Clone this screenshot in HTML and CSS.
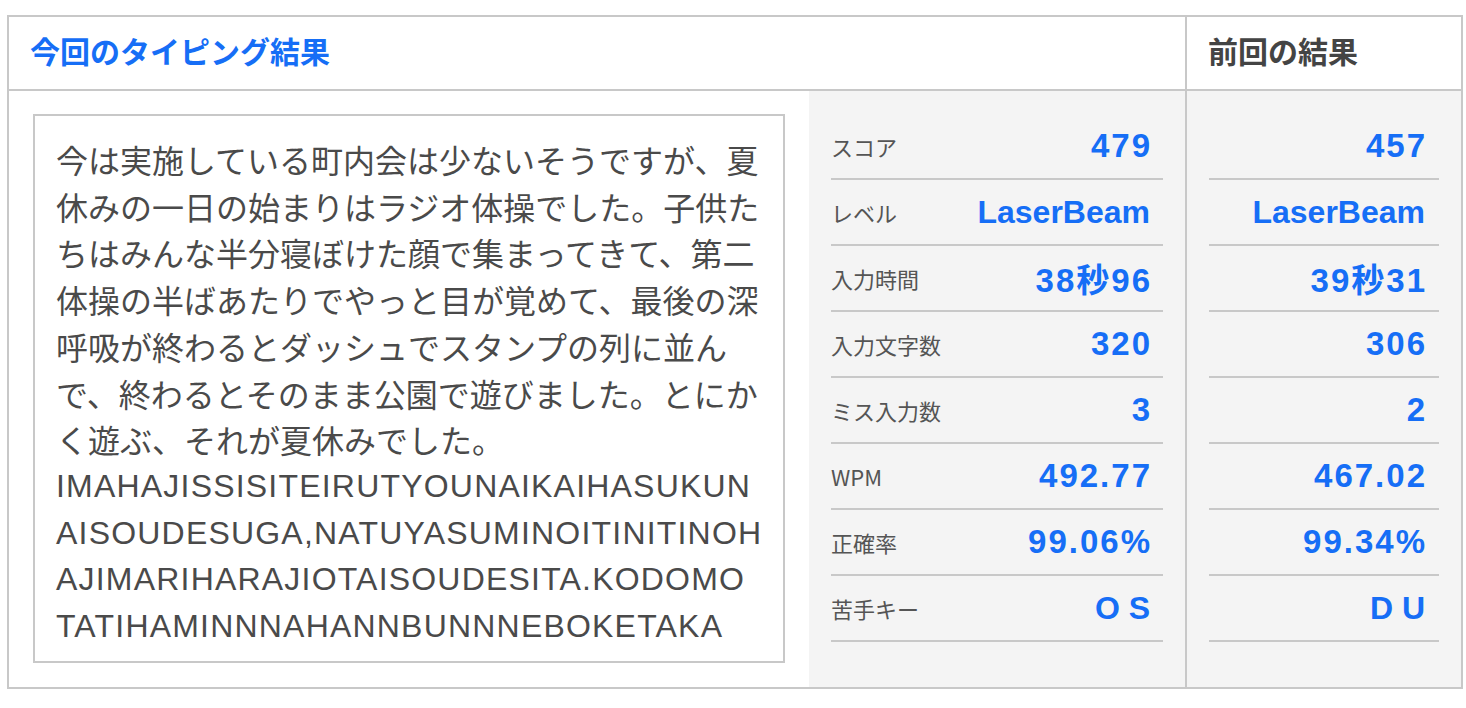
FILE: index.html
```html
<!DOCTYPE html>
<html lang="ja">
<head>
<meta charset="utf-8">
<title>タイピング結果</title>
<link rel="stylesheet" href="styles.css">
</head>
<body>
<div class="page">
  <section class="board">
    <header class="head head-current">今回のタイピング結果</header>
    <header class="head head-prev">前回の結果</header>
    <div class="current">
      <div class="text-cell">
        <div class="text-box">
          <div class="jp">今は実施している町内会は少ないそうですが、夏休みの一日の始まりはラジオ体操でした。子供たちはみんな半分寝ぼけた顔で集まってきて、第二体操の半ばあたりでやっと目が覚めて、最後の深呼吸が終わるとダッシュでスタンプの列に並んで、終わるとそのまま公園で遊びました。とにかく遊ぶ、それが夏休みでした。</div>
          <div class="roma">IMAHAJISSISITEIRUTYOUNAIKAIHASUKUN<br>AISOUDESUGA,NATUYASUMINOITINITINOH<br>AJIMARIHARAJIOTAISOUDESITA.KODOMO<br>TATIHAMINNNAHANNBUNNNEBOKETAKA</div>
        </div>
      </div>
      <dl class="stats stats-current">
        <div class="row"><dt>スコア</dt><dd class="num">479</dd></div>
        <div class="row"><dt>レベル</dt><dd>LaserBeam</dd></div>
        <div class="row"><dt>入力時間</dt><dd class="num">38秒96</dd></div>
        <div class="row"><dt>入力文字数</dt><dd class="num">320</dd></div>
        <div class="row"><dt>ミス入力数</dt><dd class="num">3</dd></div>
        <div class="row"><dt>WPM</dt><dd class="num">492.77</dd></div>
        <div class="row"><dt>正確率</dt><dd class="num">99.06%</dd></div>
        <div class="row"><dt>苦手キー</dt><dd>O S</dd></div>
      </dl>
    </div>
    <dl class="stats stats-prev">
      <div class="row"><dd class="num">457</dd></div>
      <div class="row"><dd>LaserBeam</dd></div>
      <div class="row"><dd class="num">39秒31</dd></div>
      <div class="row"><dd class="num">306</dd></div>
      <div class="row"><dd class="num">2</dd></div>
      <div class="row"><dd class="num">467.02</dd></div>
      <div class="row"><dd class="num">99.34%</dd></div>
      <div class="row"><dd>D U</dd></div>
    </dl>
  </section>
</div>
</body>
</html>
```

FILE: styles.css
```css
* {
  box-sizing: border-box;
}

html, body {
  margin: 0;
  padding: 0;
  background: #ffffff;
}

body {
  font-family: "Liberation Sans", "Noto Sans CJK JP", sans-serif;
  color: #444444;
}

.page {
  padding: 15px 0 0 7px;
}

.board {
  width: 1456px;
  border: 2px solid #c8c8c8;
  display: grid;
  grid-template-columns: 1178px 274px;
  grid-template-rows: 74px 596px;
}

.head {
  display: flex;
  align-items: center;
  padding: 0 0 6px 21px;
  font-family: "Noto Sans CJK JP", sans-serif;
  font-weight: 700;
  font-size: 30px;
  border-bottom: 2px solid #c8c8c8;
}

.head-current {
  color: #166ef6;
  border-right: 2px solid #c8c8c8;
}

.head-prev {
  color: #444444;
}

.current {
  display: flex;
  border-right: 2px solid #c8c8c8;
}

.text-cell {
  width: 800px;
  padding: 23px 24px 24px 24px;
  background: #ffffff;
}

.text-box {
  height: 549px;
  border: 2px solid #c8c8c8;
  padding: 20px 20px 0 21px;
  overflow: hidden;
  font-size: 32px;
  line-height: 46.7px;
  color: #4a4a4a;
}

.jp {
  font-family: "Noto Sans CJK JP", sans-serif;
  line-break: strict;
}

.roma {
  font-family: "Liberation Sans", sans-serif;
  word-break: break-all;
  letter-spacing: 1.2px;
}

.stats {
  margin: 0;
  background: #f4f4f4;
  padding: 23px 22px 0 22px;
}

.stats-current {
  width: 376px;
}

.row {
  height: 66px;
  border-bottom: 2px solid #c8c8c8;
  display: flex;
  align-items: center;
  justify-content: space-between;
  padding: 0 13px 0 0;
}

.stats-prev .row {
  justify-content: flex-end;
  padding-right: 14px;
}

.row dt {
  font-family: "Noto Sans CJK JP", sans-serif;
  font-size: 22px;
  color: #555555;
  margin: 0;
}

.row dd {
  margin: 0;
  font-family: "Liberation Sans", "Noto Sans CJK JP", sans-serif;
  font-weight: 700;
  font-size: 32px;
  color: #166ef6;
}

.row dd.num {
  font-size: 33px;
  letter-spacing: 2px;
  margin-right: -2px;
}
```
